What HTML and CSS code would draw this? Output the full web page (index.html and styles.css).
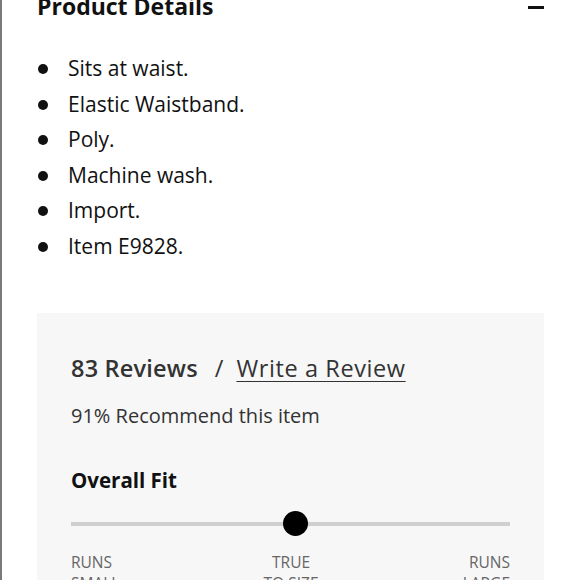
FILE: index.html
```html
<!DOCTYPE html>
<html>
<head>
<meta charset="utf-8">
<link rel="stylesheet" href="styles.css">
</head>
<body>
<div class="page">
  <div class="details-head">
    <h2 class="details-title">Product Details</h2>
    <span class="minus"></span>
  </div>
  <ul class="details-list">
    <li>Sits at waist.</li>
    <li>Elastic Waistband.</li>
    <li>Poly.</li>
    <li>Machine wash.</li>
    <li>Import.</li>
    <li>Item E9828.</li>
  </ul>
  <section class="reviews">
    <div class="reviews-head">
      <span class="count">83 Reviews</span>
      <span class="slash">/</span>
      <a class="write">Write a Review</a>
    </div>
    <p class="recommend">91% Recommend this item</p>
    <h3 class="fit-title">Overall Fit</h3>
    <div class="slider">
      <div class="track"></div>
      <div class="knob"></div>
    </div>
    <div class="fit-labels">
      <span class="lab left">RUNS<br>SMALL</span>
      <span class="lab mid">TRUE<br>TO SIZE</span>
      <span class="lab right">RUNS<br>LARGE</span>
    </div>
  </section>
</div>
</body>
</html>
```
FILE: styles.css
```css
html, body {
  margin: 0;
  padding: 0;
  background: #fff;
}
body {
  font-family: "Open Sans", Lato, sans-serif;
  color: #111;
  height: 580px;
  overflow: hidden;
}
.page {
  border-left: 2px solid #7a7a7a;
  height: 580px;
  padding: 0 36px 0 35px;
  box-sizing: border-box;
  overflow: hidden;
}
.details-head {
  display: flex;
  justify-content: space-between;
  align-items: flex-start;
  margin-top: -7px;
  height: 26px;
}
.details-title {
  margin: 0;
  font-size: 23px;
  font-weight: 700;
  line-height: 26px;
}
.minus {
  display: block;
  width: 16px;
  height: 3px;
  background: #111;
  margin-top: 13px;
}
.details-list {
  list-style: none;
  margin: 32px 0 0 0;
  padding: 0;
}
.details-list li {
  position: relative;
  font-size: 21px;
  line-height: 35.6px;
  padding-left: 31px;
}
.details-list li::before {
  content: "";
  position: absolute;
  left: 1px;
  top: 13px;
  width: 10px;
  height: 10px;
  border-radius: 50%;
  background: #111;
}
.reviews {
  background: #f7f7f7;
  margin-top: 48px;
  padding: 42px 34px 0 34px;
  height: 300px;
}
.reviews-head {
  display: flex;
  align-items: baseline;
  font-size: 23.5px;
  color: #333;
  line-height: 26px;
}
.count {
  font-weight: 600;
  letter-spacing: 0.2px;
}
.slash {
  margin: 0 13px 0 17px;
}
.write {
  text-decoration: underline;
  text-decoration-thickness: 1px;
  text-underline-offset: 4px;
  letter-spacing: 0.6px;
}
.recommend {
  margin: 24px 0 0 0;
  font-size: 20px;
  line-height: 22px;
  color: #333;
}
.fit-title {
  margin: 42px 0 0 0;
  font-size: 20.5px;
  font-weight: 700;
  line-height: 22px;
  color: #111;
}
.slider {
  position: relative;
  height: 26px;
  margin-top: 20px;
}
.track {
  position: absolute;
  left: 0;
  right: 0;
  top: 11px;
  height: 4px;
  background: #cfcfcf;
}
.knob {
  position: absolute;
  left: calc(50% - 7.5px);
  top: 0;
  width: 25px;
  height: 25px;
  border-radius: 50%;
  background: #000;
}
.fit-labels {
  display: flex;
  justify-content: space-between;
  margin-top: 15px;
  font-size: 15.5px;
  line-height: 21px;
  color: #666;
}
.lab.mid { text-align: center; }
.lab.right { text-align: right; }
```
